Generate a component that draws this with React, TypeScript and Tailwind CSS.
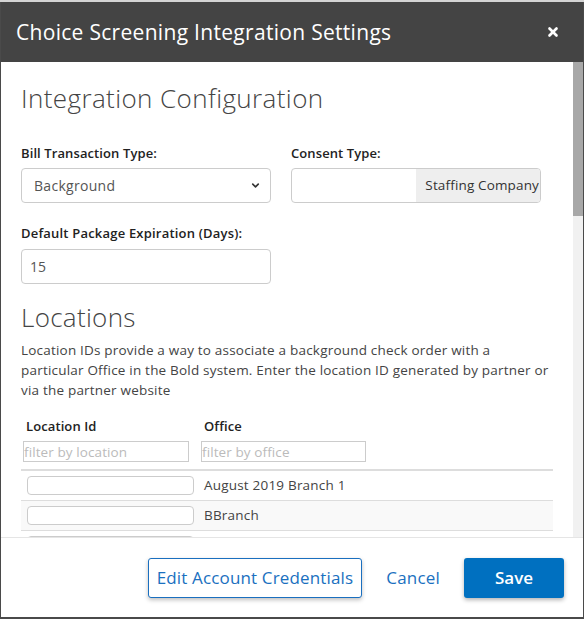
import { ChevronDown, X } from 'lucide-react';

const OFFICES = ['August 2019 Branch 1', 'BBranch', ''];

export default function App() {
  return (
    <div className="h-[619px] w-[584px] overflow-hidden border-t-2 border-[#d4d4d4] bg-[#4a4a4a] font-['Open_Sans',sans-serif] text-[#444]">
      <div className="ml-px flex h-[615px] w-[582px] flex-col bg-white">
        <header className="flex h-[60px] shrink-0 items-center justify-between bg-[#444] pl-[15px] pr-[23px]">
          <h1 className="text-[21px] leading-none tracking-[0.3px] text-white">
            Choice Screening Integration Settings
          </h1>
          <X strokeWidth={4.5} className="h-[14px] w-[14px] text-white" />
        </header>

        <div className="flex min-h-0 flex-1">
          <div className="min-w-0 flex-1 overflow-hidden px-5">
            <h2 className="mt-[21px] text-[26px] font-light leading-[30px] tracking-[0.4px] text-[#444]">
              Integration Configuration
            </h2>

            <div className="mt-[30px] grid w-[520px] grid-cols-2 gap-x-5">
              <div>
                <label className="block text-[13px] font-semibold leading-5 tracking-[0.1px] text-[#222]">
                  Bill Transaction Type:
                </label>
                <div className="mt-[5px] flex h-[35px] items-center justify-between rounded-[4px] border border-[#ccc] pl-[12px] pr-[9px] text-[14px] tracking-[0.3px] text-[#555]">
                  <span>Background</span>
                  <ChevronDown strokeWidth={3.5} className="h-[11px] w-[11px] text-[#333]" />
                </div>
              </div>
              <div>
                <label className="block text-[13px] font-semibold leading-5 tracking-[0.1px] text-[#222]">
                  Consent Type:
                </label>
                <div className="mt-[5px] flex h-[35px] overflow-hidden rounded-[4px] border border-[#ccc]">
                  <div className="flex-1" />
                  <div className="flex w-[124px] items-center justify-end bg-[#eee] pr-[1px] text-[13.5px] tracking-[0.15px] text-[#333]">
                    Staffing Company
                  </div>
                </div>
              </div>
              <div className="mt-5">
                <label className="block text-[13px] font-semibold leading-5 tracking-[0.2px] text-[#222]">
                  Default Package Expiration (Days):
                </label>
                <div className="mt-[6px] flex h-[35px] items-center rounded-[4px] border border-[#ccc] px-[8px] text-[14px] text-[#555]">
                  15
                </div>
              </div>
            </div>

            <h2 className="mt-[18px] text-[26px] font-light leading-[30px] tracking-[0.3px] text-[#444]">
              Locations
            </h2>
            <p className="mt-[8px] text-[13.5px] leading-5 tracking-[0.2px] text-[#444]">
              Location IDs provide a way to associate a background check order with a
              <br />
              particular Office in the Bold system. Enter the location ID generated by partner or
              <br />
              via the partner website
            </p>

            <div className="mt-[16px]">
              <div className="grid grid-cols-[176px_1fr] border-b-2 border-[#ddd] pb-[6px]">
                <div className="pl-[2px]">
                  <div className="pl-[3px] text-[13px] font-semibold leading-5 tracking-[0.1px] text-[#222]">
                    Location Id
                  </div>
                  <input
                    placeholder="filter by location"
                    className="mt-[5px] h-[21px] w-[166px] border border-[#ccc] px-0 text-[13.5px] tracking-[0.1px] text-[#444] placeholder:text-[#bbb] focus:outline-none"
                  />
                </div>
                <div className="pl-[4px]">
                  <div className="pl-[3px] text-[13px] font-semibold leading-5 tracking-[0.1px] text-[#222]">
                    Office
                  </div>
                  <input
                    placeholder="filter by office"
                    className="mt-[5px] h-[21px] w-[165px] border border-[#ccc] px-0 text-[13.5px] tracking-[0.1px] text-[#444] placeholder:text-[#bbb] focus:outline-none"
                  />
                </div>
              </div>

              {OFFICES.map((office, i) => (
                <div
                  key={i}
                  className={`grid h-[30px] grid-cols-[176px_1fr] items-start border-b border-[#ddd] ${
                    i % 2 === 1 ? 'bg-[#f9f9f9]' : 'bg-white'
                  }`}
                >
                  <div className="pl-[6px] pt-[5px]">
                    <div className="h-[19px] w-[167px] rounded-[4px] border border-[#ccc] bg-white" />
                  </div>
                  <div className="pl-[7px] text-[13.5px] leading-[29px] tracking-[0.2px] text-[#444]">
                    {office}
                  </div>
                </div>
              ))}
            </div>
          </div>

          <div className="flex w-[10px] shrink-0 flex-col bg-[#f1f1f1]">
            <div className="h-[154px] bg-[#a8a8a8]" />
          </div>
        </div>

        <footer className="flex h-[80px] shrink-0 items-center justify-end gap-3 border-t border-[#e5e5e5] pr-[19px]">
          <button className="h-[40px] rounded-[3px] border border-[#1a6fbf] bg-white px-[8px] text-[17px] tracking-[0.15px] text-[#1a70c0] shadow-[0_2px_4px_rgba(0,0,0,0.25)]">
            Edit Account Credentials
          </button>
          <button className="h-[40px] px-3 text-[17px] tracking-[0.2px] text-[#1a70c0]">Cancel</button>
          <button className="h-[40px] w-[100px] rounded-[3px] bg-[#0070c0] text-[17px] font-semibold text-white shadow-[0_2px_4px_rgba(0,0,0,0.3)]">
            Save
          </button>
        </footer>
      </div>
    </div>
  );
}
